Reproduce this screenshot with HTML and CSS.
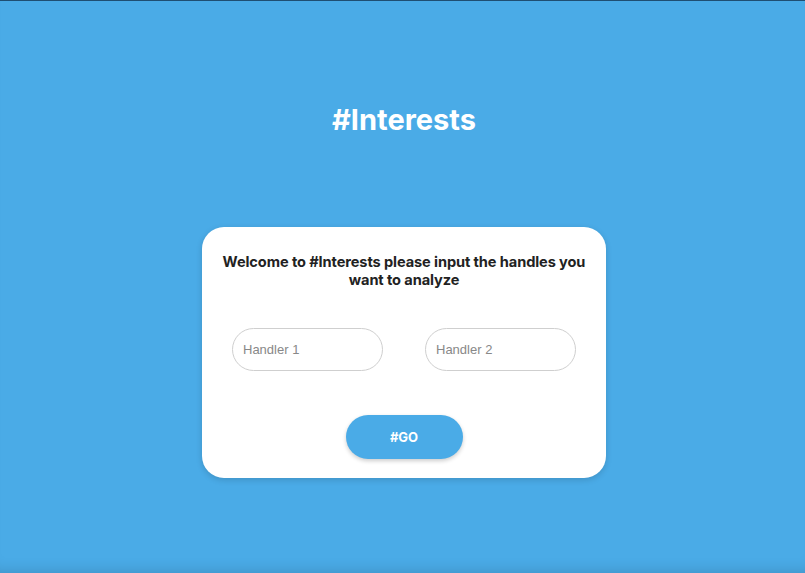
FILE: index.html
```html
<!DOCTYPE html>
<html lang="en">
<head>
<meta charset="UTF-8">
<meta name="viewport" content="width=device-width, initial-scale=1.0">
<title>#Interests</title>
<link rel="stylesheet" href="styles.css">
</head>
<body>

<div class="page">
    <h1 class="logo">#Interests</h1>

    <form class="card" onsubmit="return false">
        <h2 class="card-title">Welcome to #Interests please input the handles you want to analyze</h2>
        <div class="handles">
            <input class="handle-input" type="text" placeholder="Handler 1">
            <input class="handle-input" type="text" placeholder="Handler 2">
        </div>
        <button class="go-button" type="submit">#GO</button>
    </form>
</div>

</body>
</html>
```

FILE: styles.css
```css
/* base */
html, body {
    height: 100%;
}
body {
    margin: 0;
    background-color: #4aabe7;
    font-family: Inter, "Noto Sans", sans-serif;
    border-top: 1px solid #1f4e72;
    box-sizing: border-box;
}
.page {
    min-height: 100%;
    display: flex;
    flex-direction: column;
    align-items: center;
    padding-left: 3px;
    box-sizing: border-box;
    box-shadow: inset 0 -14px 16px -14px rgba(0, 0, 0, 0.18);
}
.logo {
    color: #fff;
    font-size: 29px;
    font-weight: 700;
    margin: 101px 0 0;
    line-height: 36px;
}

/* card */
.card {
    width: 404px;
    height: 251px;
    box-sizing: border-box;
    margin-top: 89px;
    background-color: #fff;
    border-radius: 22px;
    box-shadow: 0 2px 6px rgba(0, 0, 0, 0.15);
    padding: 26px 8px 0;
    display: flex;
    flex-direction: column;
    align-items: center;
}
.card-title {
    margin: 0;
    font-size: 14.6px;
    font-weight: 700;
    line-height: 18px;
    letter-spacing: -0.1px;
    color: #222;
    text-align: center;
}
.handles {
    display: flex;
    gap: 42px;
    margin-top: 39px;
}
.handle-input {
    width: 151px;
    height: 43px;
    box-sizing: border-box;
    border: 1px solid #cfcfcf;
    border-radius: 22px;
    padding: 0 10px;
    font-family: "Liberation Sans", Arial, sans-serif;
    font-size: 13px;
    color: #333;
    outline: none;
}
.handle-input::placeholder {
    color: #888;
}
.go-button {
    margin-top: 44px;
    width: 117px;
    height: 44px;
    border: none;
    border-radius: 22px;
    background-color: #4aabe7;
    color: #fff;
    font-family: Inter, sans-serif;
    font-size: 13px;
    font-weight: 700;
    box-shadow: 0 2px 4px rgba(0, 0, 0, 0.2);
    cursor: pointer;
}
```
